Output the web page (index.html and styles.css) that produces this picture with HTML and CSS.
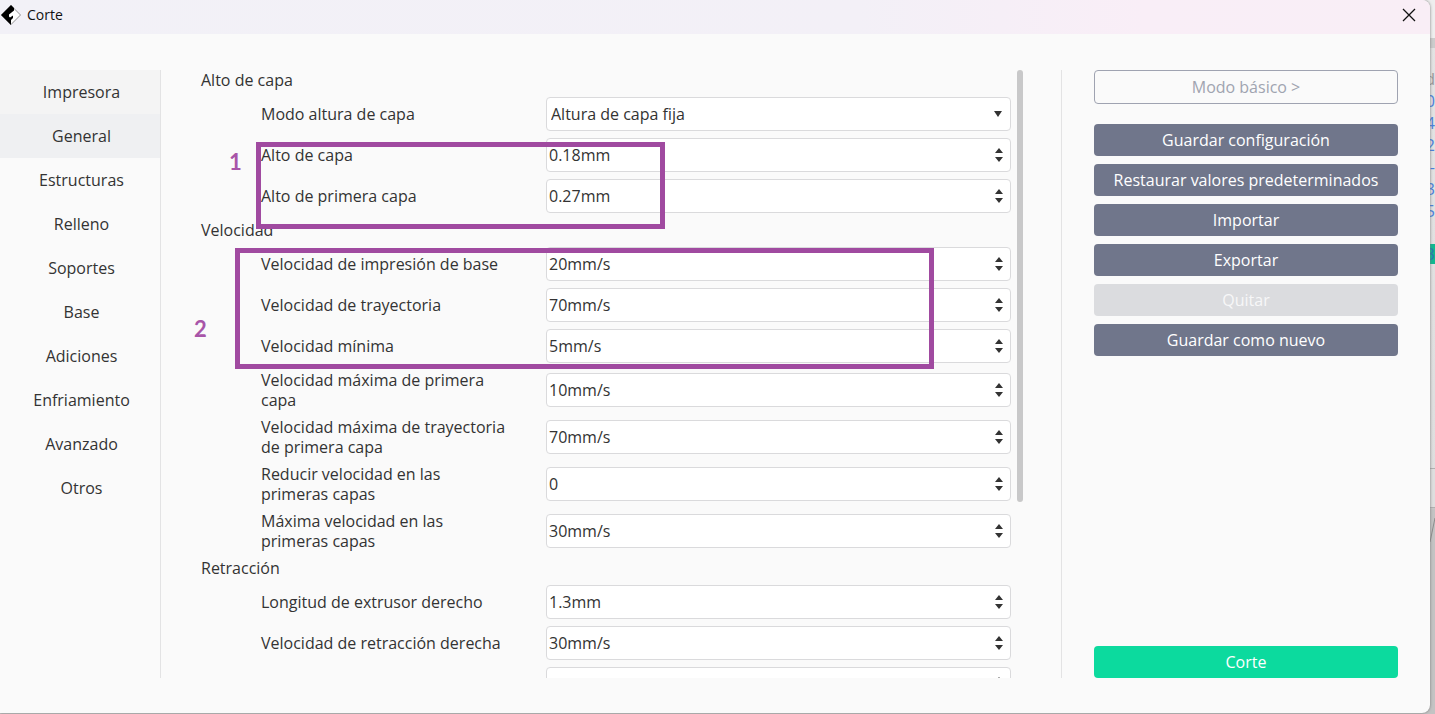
FILE: index.html
```html
<!DOCTYPE html>
<html lang="es">
<head>
<meta charset="utf-8">
<title>Corte</title>
<link rel="stylesheet" href="styles.css">
</head>
<body>
<div class="backdrop" aria-hidden="true">
  <div class="backdrop-top"></div>
  <div class="backdrop-list">
    <span class="muted">d</span><span>0</span><span>4</span><span>2</span><span>-</span><span>3</span><span>5</span>
  </div>
  <div class="backdrop-mark">3</div>
  <div class="backdrop-card"></div>
  <svg class="backdrop-line" viewBox="0 0 5 30"><path d="M0 24L5 0" stroke="#8c8c8c" fill="none"/></svg>
</div>
<div class="dialog">
  <header class="titlebar">
    <svg class="logo" viewBox="0 0 20 20" aria-hidden="true">
      <path d="M10 .5L19.500 10L10 19.500L.5 10Z" fill="#fff" stroke="#777" stroke-width=".8"/>
      <path d="M10 0L0 10L10 20V15L12 13V10.500L9 12.500L8 11.500V9.500L13 5.500V3Z" fill="#000"/>
    </svg>
    <h1 class="title">Corte</h1>
    <button class="close" aria-label="Cerrar"><svg viewBox="0 0 14 14"><path d="M1 1L13 13M13 1L1 13" stroke="#111" stroke-width="1.300" fill="none"/></svg></button>
  </header>
  <main class="body">
    <nav class="tabs">
      <button class="tab tab-first">Impresora</button>
      <button class="tab tab-active">General</button>
      <button class="tab">Estructuras</button>
      <button class="tab">Relleno</button>
      <button class="tab">Soportes</button>
      <button class="tab">Base</button>
      <button class="tab">Adiciones</button>
      <button class="tab">Enfriamiento</button>
      <button class="tab">Avanzado</button>
      <button class="tab">Otros</button>
    </nav>
    <form class="settings" id="settings">
      <h2 class="group">Alto de capa</h2>
      <div class="row"><label for="f0">Modo altura de capa</label><div class="field"><select id="f0"><option>Altura de capa fija</option></select><svg class="caret" viewBox="0 0 8 6"><path d="M0 0H8L4 6Z"/></svg></div></div>
      <div class="row"><label for="f1">Alto de capa</label><div class="field"><input id="f1" type="text" value="0.18mm"><svg class="spin" viewBox="0 0 8 14"><path d="M0 5L4 0L8 5ZM0 9H8L4 14Z"/></svg></div></div>
      <div class="row"><label for="f2">Alto de primera capa</label><div class="field"><input id="f2" type="text" value="0.27mm"><svg class="spin" viewBox="0 0 8 14"><path d="M0 5L4 0L8 5ZM0 9H8L4 14Z"/></svg></div></div>
      <h2 class="group">Velocidad</h2>
      <div class="row"><label for="f3">Velocidad de impresión de base</label><div class="field"><input id="f3" type="text" value="20mm/s"><svg class="spin" viewBox="0 0 8 14"><path d="M0 5L4 0L8 5ZM0 9H8L4 14Z"/></svg></div></div>
      <div class="row"><label for="f4">Velocidad de trayectoria</label><div class="field"><input id="f4" type="text" value="70mm/s"><svg class="spin" viewBox="0 0 8 14"><path d="M0 5L4 0L8 5ZM0 9H8L4 14Z"/></svg></div></div>
      <div class="row"><label for="f5">Velocidad mínima</label><div class="field"><input id="f5" type="text" value="5mm/s"><svg class="spin" viewBox="0 0 8 14"><path d="M0 5L4 0L8 5ZM0 9H8L4 14Z"/></svg></div></div>
      <div class="row"><label for="f6">Velocidad máxima de primera capa</label><div class="field"><input id="f6" type="text" value="10mm/s"><svg class="spin" viewBox="0 0 8 14"><path d="M0 5L4 0L8 5ZM0 9H8L4 14Z"/></svg></div></div>
      <div class="row"><label for="f7">Velocidad máxima de trayectoria de primera capa</label><div class="field"><input id="f7" type="text" value="70mm/s"><svg class="spin" viewBox="0 0 8 14"><path d="M0 5L4 0L8 5ZM0 9H8L4 14Z"/></svg></div></div>
      <div class="row"><label for="f8">Reducir velocidad en las<br>primeras capas</label><div class="field"><input id="f8" type="text" value="0"><svg class="spin" viewBox="0 0 8 14"><path d="M0 5L4 0L8 5ZM0 9H8L4 14Z"/></svg></div></div>
      <div class="row"><label for="f9">Máxima velocidad en las<br>primeras capas</label><div class="field"><input id="f9" type="text" value="30mm/s"><svg class="spin" viewBox="0 0 8 14"><path d="M0 5L4 0L8 5ZM0 9H8L4 14Z"/></svg></div></div>
      <h2 class="group">Retracción</h2>
      <div class="row"><label for="f10">Longitud de extrusor derecho</label><div class="field"><input id="f10" type="text" value="1.3mm"><svg class="spin" viewBox="0 0 8 14"><path d="M0 5L4 0L8 5ZM0 9H8L4 14Z"/></svg></div></div>
      <div class="row"><label for="f11">Velocidad de retracción derecha</label><div class="field"><input id="f11" type="text" value="30mm/s"><svg class="spin" viewBox="0 0 8 14"><path d="M0 5L4 0L8 5ZM0 9H8L4 14Z"/></svg></div></div>
      <div class="row"><label for="f12">Velocidad de extrusión</label><div class="field"><input id="f12" type="text"><svg class="spin" viewBox="0 0 8 14"><path d="M0 5L4 0L8 5ZM0 9H8L4 14Z"/></svg></div></div>
    </form>
    <div class="scrollbar"><div class="thumb"></div></div>
    <aside class="actions">
      <button class="btn btn-outline">Modo básico &gt;</button>
      <button class="btn">Guardar configuración</button>
      <button class="btn">Restaurar valores predeterminados</button>
      <button class="btn">Importar</button>
      <button class="btn">Exportar</button>
      <button class="btn btn-disabled" disabled>Quitar</button>
      <button class="btn">Guardar como nuevo</button>
      <button class="btn btn-primary">Corte</button>
    </aside>
  </main>
</div>
<div class="mark mark-one"></div>
<span class="num num-one">1</span>
<div class="mark mark-two"></div>
<span class="num num-two">2</span>
</body>
</html>
```
FILE: styles.css
```css
* { box-sizing: border-box; }
body {
  margin: 0;
  height: 100vh;
  padding: 0 5px 1px 0;
  position: relative;
  overflow: hidden;
  background: #c4c4c4;
  color: #333;
  font: 16px/20px "Open Sans", "Noto Sans", sans-serif;
}
button, input, select { font: inherit; color: inherit; }
h1, h2 { margin: 0; font: inherit; }

.dialog {
  position: relative;
  height: 100%;
  display: flex;
  flex-direction: column;
  background: #fafafa;
  border-radius: 0 8px 8px 0;
  overflow: hidden;
  box-shadow: 0 0 3px #777;
}
.titlebar {
  flex: none;
  height: 34px;
  display: flex;
  align-items: center;
  gap: 6px;
  padding: 0 14px 4px 1px;
  background: linear-gradient(90deg, #f2f1f7 0%, #f3f0f7 60%, #f9eef7 80%, #f9eef6 100%);
}
.logo { width: 20px; height: 20px; }
.title { flex: 1; font-size: 14px; color: #111; }
.close { display: flex; padding: 0; border: 0; background: none; }
.close svg { width: 14px; height: 14px; }

.body { flex: 1; min-height: 0; display: flex; padding: 36px 32px 35px 0; }
.tabs { width: 161px; flex: none; border-right: 1px solid #e3e3e4; }
.tab { display: block; width: 100%; height: 44px; padding: 0 0 0 3px; border: 0; background: none; text-align: center; }
.tab-first { background: #f4f4f4; }
.tab-active { background: #eff0f2; }

.settings { flex: 1; min-width: 0; padding-left: 40px; display: flex; flex-direction: column; gap: 7px; overflow: hidden; }
.settings > * { flex: none; }
.row { display: grid; grid-template-columns: 250px 1fr; gap: 35px; align-items: center; padding-left: 60px; }
.field { position: relative; height: 34px; }
.field input, .field select {
  display: block;
  width: 100%;
  height: 34px;
  padding: 0 24px 0 2px;
  border: 1px solid #dadadc;
  border-radius: 4px;
  background: #fff;
  appearance: none;
  outline: 0;
}
.field select { padding-left: 4px; }
.field svg { position: absolute; fill: #333; pointer-events: none; }
.caret { right: 9px; top: 14px; width: 8px; height: 6px; }
.spin { right: 8px; top: 10px; width: 8px; height: 14px; }

.scrollbar { flex: none; width: 51px; padding-left: 6px; border-right: 1px solid #e3e3e4; }
.thumb { width: 6px; height: 71%; border-radius: 3px; background: #c8c8c9; }

.actions { flex: none; width: 336px; padding-left: 32px; display: flex; flex-direction: column; gap: 8px; }
.btn { height: 32px; flex: none; padding: 0; border: 0; border-radius: 4px; background: #70768b; color: #fff; }
.btn-outline { height: 34px; margin-bottom: 12px; border: 1px solid #9fa3b1; background: #fafafa; color: #a0a4b0; }
.btn-disabled { background: #dbdcdf; color: #f7f7f8; }
.btn-primary { margin-top: auto; background: #0cda9e; }

.mark { position: absolute; border: 5px solid #a04aa0; pointer-events: none; }
.mark-one { left: 256px; top: 142px; width: 409px; height: 87px; }
.mark-two { left: 235px; top: 248px; width: 699px; height: 121px; }
.num { position: absolute; font: bold 22px/24px "Lato", sans-serif; color: #a855a8; }
.num-one { left: 229px; top: 150px; }
.num-two { left: 194px; top: 317px; }

.backdrop { position: absolute; top: 0; right: 0; width: 12px; height: 100%; overflow: hidden; background: linear-gradient(#e3e3e3, #dedede 500px, #c3c3c3 510px); }
.backdrop-top { height: 48px; border-bottom: 10px solid #ccc; background: #eee; }
.backdrop-list { display: flex; flex-direction: column; align-items: flex-end; padding-top: 20px; line-height: 22px; color: #4a80dd; }
.backdrop-list .muted { color: #999; }
.backdrop-mark { margin-top: 22px; height: 20px; background: #10b890; color: #2878b0; text-align: right; }
.backdrop-card { margin-top: 204px; height: 40px; border: 1px solid #b0b0b0; border-width: 1px 0; background: #dedede; }
.backdrop-line { position: absolute; right: 0; top: 518px; width: 5px; height: 30px; }
```
